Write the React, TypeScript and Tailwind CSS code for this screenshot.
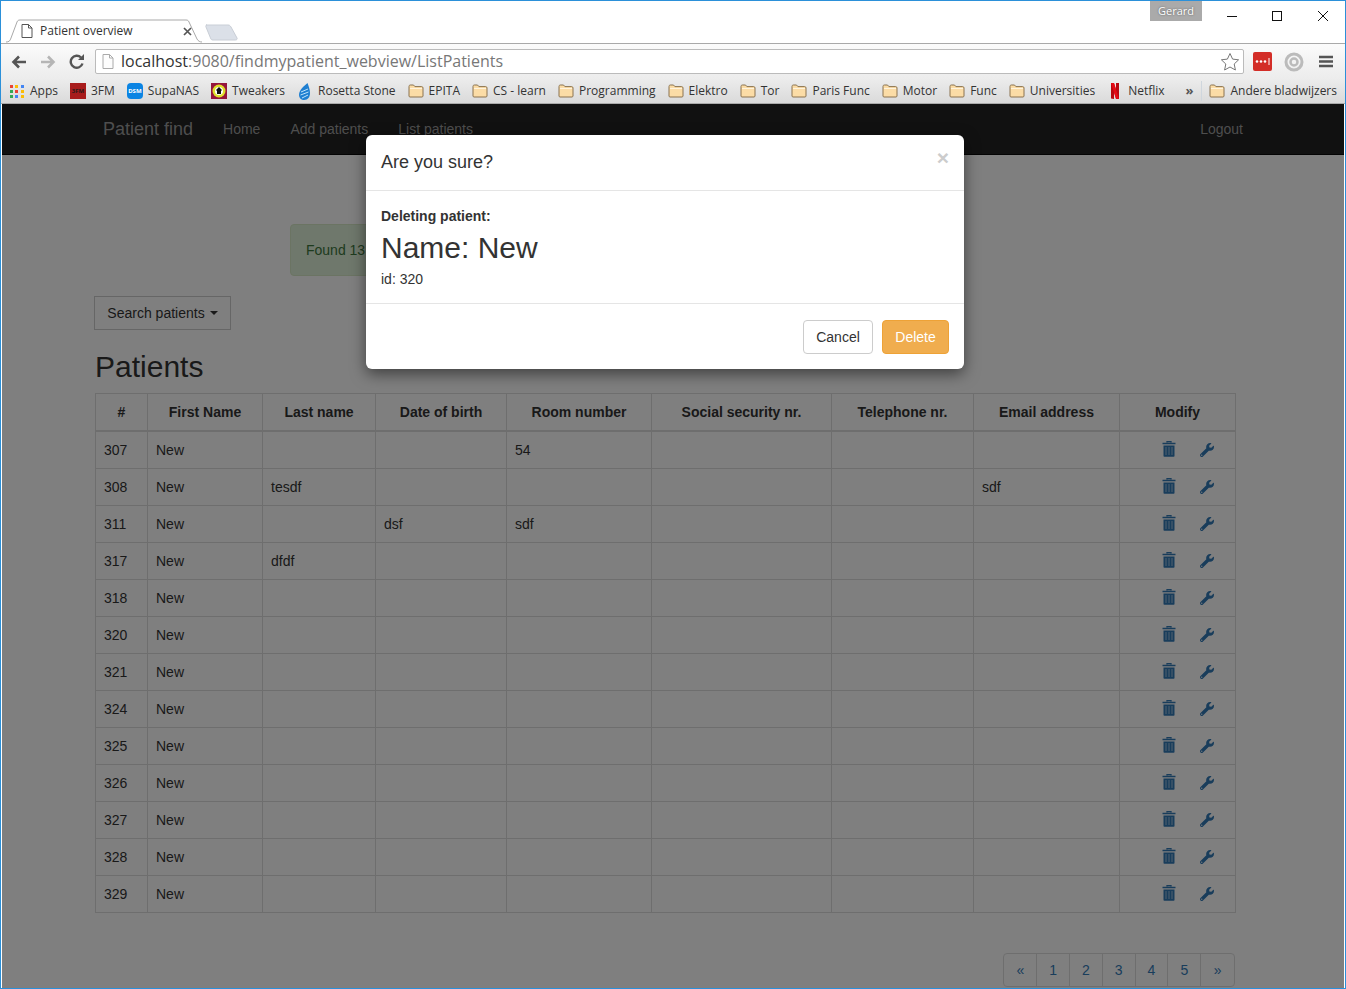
import React from "react";
import { FaWrench } from "react-icons/fa";

const patients = [
  { id: 307, last: "", dob: "", room: "54", email: "" },
  { id: 308, last: "tesdf", dob: "", room: "", email: "sdf" },
  { id: 311, last: "", dob: "dsf", room: "sdf", email: "" },
  { id: 317, last: "dfdf", dob: "", room: "", email: "" },
  { id: 318, last: "", dob: "", room: "", email: "" },
  { id: 320, last: "", dob: "", room: "", email: "" },
  { id: 321, last: "", dob: "", room: "", email: "" },
  { id: 324, last: "", dob: "", room: "", email: "" },
  { id: 325, last: "", dob: "", room: "", email: "" },
  { id: 326, last: "", dob: "", room: "", email: "" },
  { id: 327, last: "", dob: "", room: "", email: "" },
  { id: 328, last: "", dob: "", room: "", email: "" },
  { id: 329, last: "", dob: "", room: "", email: "" },
];

const Folder = () => (
  <svg width="16" height="14" viewBox="0 0 16 14" className="shrink-0">
    <path d="M1 12V2.5C1 1.7 1.5 1 2.3 1h3.2l1.4 1.6h6.8c.8 0 1.3.6 1.3 1.3V12c0 .6-.5 1-1 1H2c-.6 0-1-.4-1-1z" fill="#fbdca6" stroke="#8a7350" />
    <path d="M2 4.5h12" stroke="#fff3dc" />
  </svg>
);

const AppsIcon = () => {
  const colors = ["#ea4335", "#fbbc05", "#4285f4", "#34a853", "#ea4335", "#fbbc05", "#34a853", "#4285f4", "#fbbc05"];
  return (
    <div className="grid grid-cols-3 gap-[2px] w-[14px] shrink-0 mx-px">
      {colors.map((c, i) => (
        <svg key={i} width="3" height="3" className="block">
          <rect width="3" height="3" fill={c} />
        </svg>
      ))}
    </div>
  );
};

const FmIcon = () => (
  <div className="w-4 h-4 bg-[#a81c1c] text-[#2b1a1a] text-[6px] leading-4 text-center font-bold shrink-0">3FM</div>
);

const NasIcon = () => (
  <div className="w-4 h-4 bg-[#0b84e3] rounded-sm text-white text-[6px] leading-4 text-center font-bold shrink-0">DSM</div>
);

const TweakersIcon = () => (
  <svg width="16" height="16" viewBox="0 0 16 16" className="shrink-0">
    <rect width="16" height="16" fill="#96163c" />
    <circle cx="8" cy="8" r="6.5" fill="#dfe02a" />
    <circle cx="8" cy="8" r="4" fill="#fff" />
    <path d="M5 7l3-3 3 3-1 1v3H6V8z" fill="#111" />
  </svg>
);

const RosettaIcon = () => (
  <svg width="14" height="17" viewBox="0 0 14 17" className="shrink-0 mx-px">
    <path d="M9.5 0C6 3 1 7 1 12c0 3 2.500 5 5 5 4 0 6-3 6-7 0-4-1.500-7-2.500-10z" fill="#1f7fd1" />
    <path d="M3 9l7-3M2.500 12l8-3M4 15l6-3" stroke="#bfe3fb" fill="none" />
  </svg>
);

const NetflixIcon = () => (
  <svg width="16" height="16" viewBox="0 0 16 16" className="shrink-0">
    <path d="M4 0h3l5 16H9z" fill="#e50914" />
    <path d="M4 0h3v16l-3-.4zM9 0h3v16l-3-.4z" fill="#b8070f" />
    <path d="M4 0h3l5 16-3-.4z" fill="#e50914" />
  </svg>
);

const bookmarks: { label: string; icon: React.ReactNode }[] = [
  { label: "Apps", icon: <AppsIcon /> },
  { label: "3FM", icon: <FmIcon /> },
  { label: "SupaNAS", icon: <NasIcon /> },
  { label: "Tweakers", icon: <TweakersIcon /> },
  { label: "Rosetta Stone", icon: <RosettaIcon /> },
  { label: "EPITA", icon: <Folder /> },
  { label: "CS - learn", icon: <Folder /> },
  { label: "Programming", icon: <Folder /> },
  { label: "Elektro", icon: <Folder /> },
  { label: "Tor", icon: <Folder /> },
  { label: "Paris Func", icon: <Folder /> },
  { label: "Motor", icon: <Folder /> },
  { label: "Func", icon: <Folder /> },
  { label: "Universities", icon: <Folder /> },
  { label: "Netflix", icon: <NetflixIcon /> },
];

const TrashIcon = () => (
  <svg width="14" height="16" viewBox="0 0 14 16" className="text-[#337ab7]">
    <path d="M5 1.500V.5h4v1M.5 2.500h13" stroke="currentColor" fill="none" strokeWidth="1.300" />
    <path d="M1.500 4.500h11V15a.8.8 0 0 1-.8.8H2.300a.8.8 0 0 1-.8-.8z" fill="currentColor" />
    <path d="M4 6v8M7 6v8M10 6v8" stroke="#8fb6d8" strokeWidth="1.200" />
  </svg>
);

const Tab = () => (
  <div className="relative w-[196px] h-[24px] ml-[5px] flex items-center pl-[15px] pr-[10px] gap-[7px]">
    <svg width="196" height="24" viewBox="0 0 196 24" className="absolute left-0 top-0">
      <path d="M0 23c3 0 4-1 5-4L11 3c.5-1.500 1.500-2 3-2h166c1.500 0 2.500.5 3 2l8 17c1 2 3 3 5 3" fill="#fff" stroke="#a9a9a9" />
    </svg>
    <svg width="12" height="14" viewBox="0 0 12 14" className="relative shrink-0">
      <path d="M1 .5h6.500L11 4v9.500H1z M7.500 .5V4H11" fill="#fff" stroke="#555" />
    </svg>
    <span className="relative text-[12px] text-[#333] [font-family:'Open_Sans',sans-serif] flex-1">Patient overview</span>
    <svg width="9" height="9" viewBox="0 0 9 9" className="relative shrink-0">
      <path d="M1 1l7 7M8 1l-7 7" stroke="#555" strokeWidth="1.700" />
    </svg>
  </div>
);

const BrowserChrome = () => (
  <div className="[font-family:'Open_Sans',sans-serif]">
    <div className="h-[43px] flex items-end bg-white border-b border-[#a9a9a9] relative">
      <Tab />
      <svg width="34" height="17" viewBox="0 0 34 17" className="ml-[3px] mb-[2px]">
        <path d="M1 1h22c1.500 0 2 .5 3 2l6 11c.5 1-.2 2-1.500 2H8c-1.500 0-2-.5-2.500-2L1 3c-.5-1 0-2 1-2z" fill="#dbe0e8" stroke="#c9ced6" />
      </svg>
      <div className="ml-auto self-start flex items-start">
        <div className="w-[52px] h-5 bg-[#aaa] text-white text-[11px] leading-[20px] text-center [text-shadow:0_0_2px_#555]">Gerard</div>
        <div className="flex items-center h-[29px] pl-[25px]">
          <svg width="10" height="10" viewBox="0 0 10 10"><path d="M0 5.500h10" stroke="#111" /></svg>
          <svg width="10" height="10" viewBox="0 0 10 10" className="ml-[35px]"><rect x=".5" y=".5" width="9" height="9" fill="none" stroke="#111" /></svg>
          <svg width="10" height="10" viewBox="0 0 10 10" className="ml-[36px] mr-[17px]"><path d="M0 0l10 10M10 0L0 10" stroke="#111" /></svg>
        </div>
      </div>
    </div>
    <div className="h-[35px] flex items-center bg-linear-to-b from-[#fbfbfb] to-[#ececec] pl-[10px]">
      <svg width="16" height="14" viewBox="0 0 16 14"><path d="M15 7H3M8 1.500L2.500 7 8 12.500" stroke="#555" strokeWidth="2.600" fill="none" /></svg>
      <svg width="16" height="14" viewBox="0 0 16 14" className="ml-[13px]"><path d="M1 7h12M8 1.500L13.500 7 8 12.500" stroke="#b5b5b5" strokeWidth="2.600" fill="none" /></svg>
      <svg width="16" height="16" viewBox="0 0 16 16" className="ml-[13px]"><path d="M13.500 9.500A6 6 0 1 1 12 3.500" stroke="#555" strokeWidth="2.400" fill="none" /><path d="M9 6h6V0z" fill="#555" /></svg>
      <div className="ml-[10px] w-[1149px] h-[25px] bg-white border border-[#bbb] rounded-[2px] flex items-center pl-[6px] pr-[3px]">
        <svg width="12" height="15" viewBox="0 0 12 15" className="shrink-0"><path d="M1 .5h6.500L11 4v10.500H1z M7.500 .5V4H11" fill="#fdfdfd" stroke="#aaa" /></svg>
        <div className="ml-[7px] text-[16px] leading-[23px] text-[#333] flex-1 whitespace-nowrap">
          localhost<span className="text-[#777]">:9080/findmypatient_webview/ListPatients</span>
        </div>
        <svg width="20" height="20" viewBox="0 0 20 20"><path d="M10 1.500l2.600 5.600 6 .7-4.400 4.200 1.200 6L10 15l-5.400 3 1.200-6L1.400 7.800l6-.7z" fill="#fff" stroke="#777" /></svg>
      </div>
      <div className="ml-[9px] w-[19px] h-[19px] bg-[#d32d27] rounded-[2px] flex items-center justify-center">
        <svg width="15" height="7" viewBox="0 0 15 7">
          <circle cx="2" cy="3.500" r="1.300" fill="#fff" /><circle cx="6" cy="3.500" r="1.300" fill="#fff" /><circle cx="10" cy="3.500" r="1.300" fill="#fff" /><path d="M14 0v7" stroke="#fff" />
        </svg>
      </div>
      <svg width="20" height="20" viewBox="0 0 20 20" className="ml-[12px]">
        <circle cx="10" cy="10" r="8" fill="none" stroke="#bbb" strokeWidth="3" />
        <circle cx="10" cy="10" r="3.500" fill="none" stroke="#bbb" strokeWidth="2.500" />
      </svg>
      <svg width="14" height="13" viewBox="0 0 14 13" className="ml-[15px]"><path d="M0 2h14M0 6.500h14M0 11h14" stroke="#555" strokeWidth="2.400" /></svg>
    </div>
    <div className="h-[25px] flex items-center bg-linear-to-b from-[#ececec] to-[#dadada] pl-[8px] pr-[8px] text-[12px] text-[#333] border-b border-[#aaa]">
      <div className="flex items-center gap-3">
        {bookmarks.map((b) => (
          <div key={b.label} className="flex items-center gap-[5px] whitespace-nowrap">
            {b.icon}
            <span>{b.label}</span>
          </div>
        ))}
      </div>
      <div className="ml-auto flex items-center">
        <span className="text-[#555] text-[13px] font-bold mr-[8px]">»</span>
        <div className="w-px h-[20px] bg-[#cfd6dd] mr-[7px]" />
        <div className="flex items-center gap-[5px] whitespace-nowrap">
          <Folder />
          <span>Andere bladwijzers</span>
        </div>
      </div>
    </div>
  </div>
);

const Navbar = () => (
  <div className="h-[51px] bg-[#222] border-b border-[#080808]">
    <div className="ml-[78px] w-[1170px] pl-[23px] pr-[7px] h-[50px] flex items-center text-[#9d9d9d] text-[14px]">
      <span className="text-[18px] mr-[30px]">Patient find</span>
      <span className="mr-[30px]">Home</span>
      <span className="mr-[30px]">Add patients</span>
      <span>List patients</span>
      <span className="ml-auto">Logout</span>
    </div>
  </div>
);

const PatientTable = () => (
  <table className="w-[1140px] table-fixed border border-[#ddd] text-[14px] leading-5 text-[#333]">
    <colgroup>
      <col className="w-[52px]" />
      <col className="w-[115px]" />
      <col className="w-[113px]" />
      <col className="w-[131px]" />
      <col className="w-[145px]" />
      <col className="w-[180px]" />
      <col className="w-[142px]" />
      <col className="w-[146px]" />
      <col className="w-[116px]" />
    </colgroup>
    <thead>
      <tr className="border-b-2 border-[#ddd]">
        {["#", "First Name", "Last name", "Date of birth", "Room number", "Social security nr.", "Telephone nr.", "Email address", "Modify"].map((h) => (
          <th key={h} className="border border-[#ddd] border-b-2 p-2 font-bold text-center">{h}</th>
        ))}
      </tr>
    </thead>
    <tbody>
      {patients.map((p) => (
        <tr key={p.id}>
          <td className="border border-[#ddd] p-2">{p.id}</td>
          <td className="border border-[#ddd] p-2">New</td>
          <td className="border border-[#ddd] p-2">{p.last}</td>
          <td className="border border-[#ddd] p-2">{p.dob}</td>
          <td className="border border-[#ddd] p-2">{p.room}</td>
          <td className="border border-[#ddd] p-2"></td>
          <td className="border border-[#ddd] p-2"></td>
          <td className="border border-[#ddd] p-2">{p.email}</td>
          <td className="border border-[#ddd] p-0">
            <div className="flex items-center pl-[42px] gap-[24px] h-[36px] -mt-[2px]">
              <TrashIcon />
              <FaWrench size={14} className="text-[#337ab7] mt-px" />
            </div>
          </td>
        </tr>
      ))}
    </tbody>
  </table>
);

const Pagination = () => (
  <div className="flex justify-end mt-[40px]">
    <div className="flex border border-[#ddd] rounded-[4px] divide-x divide-[#ddd] text-[14px] leading-5 text-[#337ab7] bg-white">
      {["«", "1", "2", "3", "4", "5", "»"].map((n) => (
        <span key={n} className="w-[32.800px] py-[6px] text-center">{n}</span>
      ))}
    </div>
  </div>
);

const DeleteModal = () => (
  <div className="absolute left-[364px] top-[31px] w-[598px] bg-white rounded-[6px] shadow-[0_5px_15px_rgba(0,0,0,0.5)] text-[14px] leading-5 text-[#333]">
    <div className="relative h-[56px] border-b border-[#e5e5e5] pl-[15px] pt-[16px]">
      <div className="text-[18px] leading-[22px]">Are you sure?</div>
      <span className="absolute right-[15px] top-[12px] text-[21px] leading-[21px] font-bold text-[#ccc]">×</span>
    </div>
    <div className="h-[113px] border-b border-[#e5e5e5] pl-[15px] pt-[15px]">
      <div className="font-bold">Deleting patient:</div>
      <div className="text-[30px] leading-[33px] mt-[5px]">Name: New</div>
      <div className="mt-[5px]">id: 320</div>
    </div>
    <div className="h-[65px] flex justify-end items-center gap-[9px] pr-[15px]">
      <button className="h-[34px] w-[70px] bg-white border border-[#ccc] rounded-[4px]">Cancel</button>
      <button className="h-[34px] w-[67px] bg-[#f0ad4e] border border-[#eea236] rounded-[4px] text-white">Delete</button>
    </div>
  </div>
);

export default function App() {
  return (
    <div className="w-[1346px] h-[989px] overflow-hidden border border-[#2b90d9] bg-white flex flex-col [font-family:'Liberation_Sans',Arial,sans-serif]">
      <BrowserChrome />
      <div className="relative flex-1 overflow-hidden mx-px">
        <Navbar />
        <div className="ml-[78px] w-[1170px] px-[15px]">
          <div className="mt-[69px] ml-[195px] w-[390px] h-[52px] bg-[#dff0d8] border border-[#d6e9c6] rounded-[4px] text-[#3c763d] text-[14px] leading-5 px-[15px] py-[15px]">
            Found 13 patients
          </div>
          <button className="mt-[20px] -ml-px h-[34px] w-[137px] border border-[#ccc] text-[14px] text-[#333] flex items-center justify-center gap-[5px]">
            Search patients
            <span className="w-0 h-0 border-x-4 border-x-transparent border-t-4 border-t-[#333]" />
          </button>
          <h1 className="text-[30px] leading-[33px] text-[#333] mt-[20px] mb-[10px]">Patients</h1>
          <PatientTable />
          <Pagination />
        </div>
        <div className="absolute inset-0 bg-black/50" />
        <DeleteModal />
      </div>
    </div>
  );
}
